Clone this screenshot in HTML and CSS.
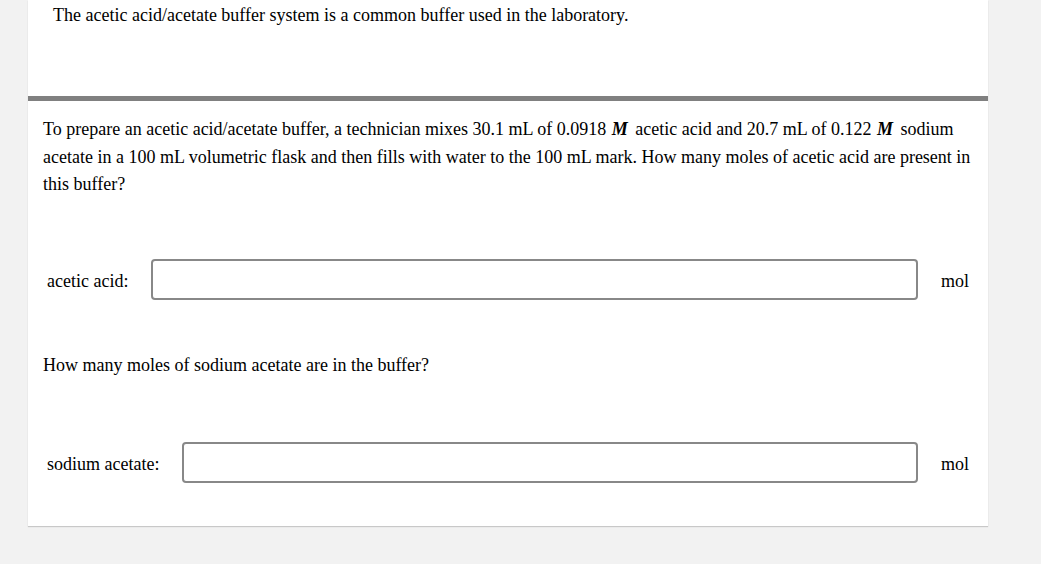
FILE: index.html
```html
<!DOCTYPE html>
<html>
<head>
<meta charset="utf-8">
<link rel="stylesheet" href="styles.css">
</head>
<body>
<div class="card">
  <div class="intro">The acetic acid/acetate buffer system is a common buffer used in the laboratory.</div>
  <div class="divider"></div>
  <div class="question">
    <p class="prompt">To prepare an acetic acid/acetate buffer, a technician mixes 30.1 mL of 0.0918 <i class="unit">M</i> acetic acid and 20.7 mL of 0.122 <i class="unit">M</i> sodium acetate in a 100 mL volumetric flask and then fills with water to the 100 mL mark. How many moles of acetic acid are present in this buffer?</p>
    <div class="answer-row row-one">
      <label class="label">acetic acid:</label>
      <div class="field"></div>
      <span class="suffix">mol</span>
    </div>
    <p class="prompt prompt-two">How many moles of sodium acetate are in the buffer?</p>
    <div class="answer-row row-two">
      <label class="label">sodium acetate:</label>
      <div class="field"></div>
      <span class="suffix">mol</span>
    </div>
  </div>
</div>
</body>
</html>
```
FILE: styles.css
```css
html, body {
  margin: 0;
  padding: 0;
  background: #f2f2f2;
  height: 100%;
}
body {
  font-family: "Liberation Serif", "Times New Roman", serif;
  font-size: 18px;
  color: #000;
}
.card {
  margin-left: 28px;
  width: 960px;
  background: #fff;
  box-shadow: 0 1px 1px #c8c8c8;
  padding-bottom: 43px;
}
.intro {
  box-sizing: border-box;
  height: 96px;
  padding: 5px 0 0 25px;
  line-height: 20px;
}
.divider {
  height: 5px;
  background: #808080;
}
.question {
  padding: 15px 14px 0 15px;
}
.prompt {
  margin: 0;
  line-height: 27.5px;
}
.unit {
  font-weight: bold;
  margin: 0 3px 0 1px;
}
.answer-row {
  display: flex;
  align-items: center;
  padding: 0 6px 0 4px;
}
.row-one {
  margin-top: 60px;
}
.row-two {
  margin-top: 63px;
}
.prompt-two {
  margin-top: 52px;
}
.label {
  margin-right: 23px;
  padding-top: 4px;
}
.field {
  flex: 1;
  height: 41px;
  box-sizing: border-box;
  border: 2px solid #888;
  border-radius: 4px;
}
.suffix {
  margin-left: 23px;
  width: 27px;
  padding-top: 4px;
}
```
